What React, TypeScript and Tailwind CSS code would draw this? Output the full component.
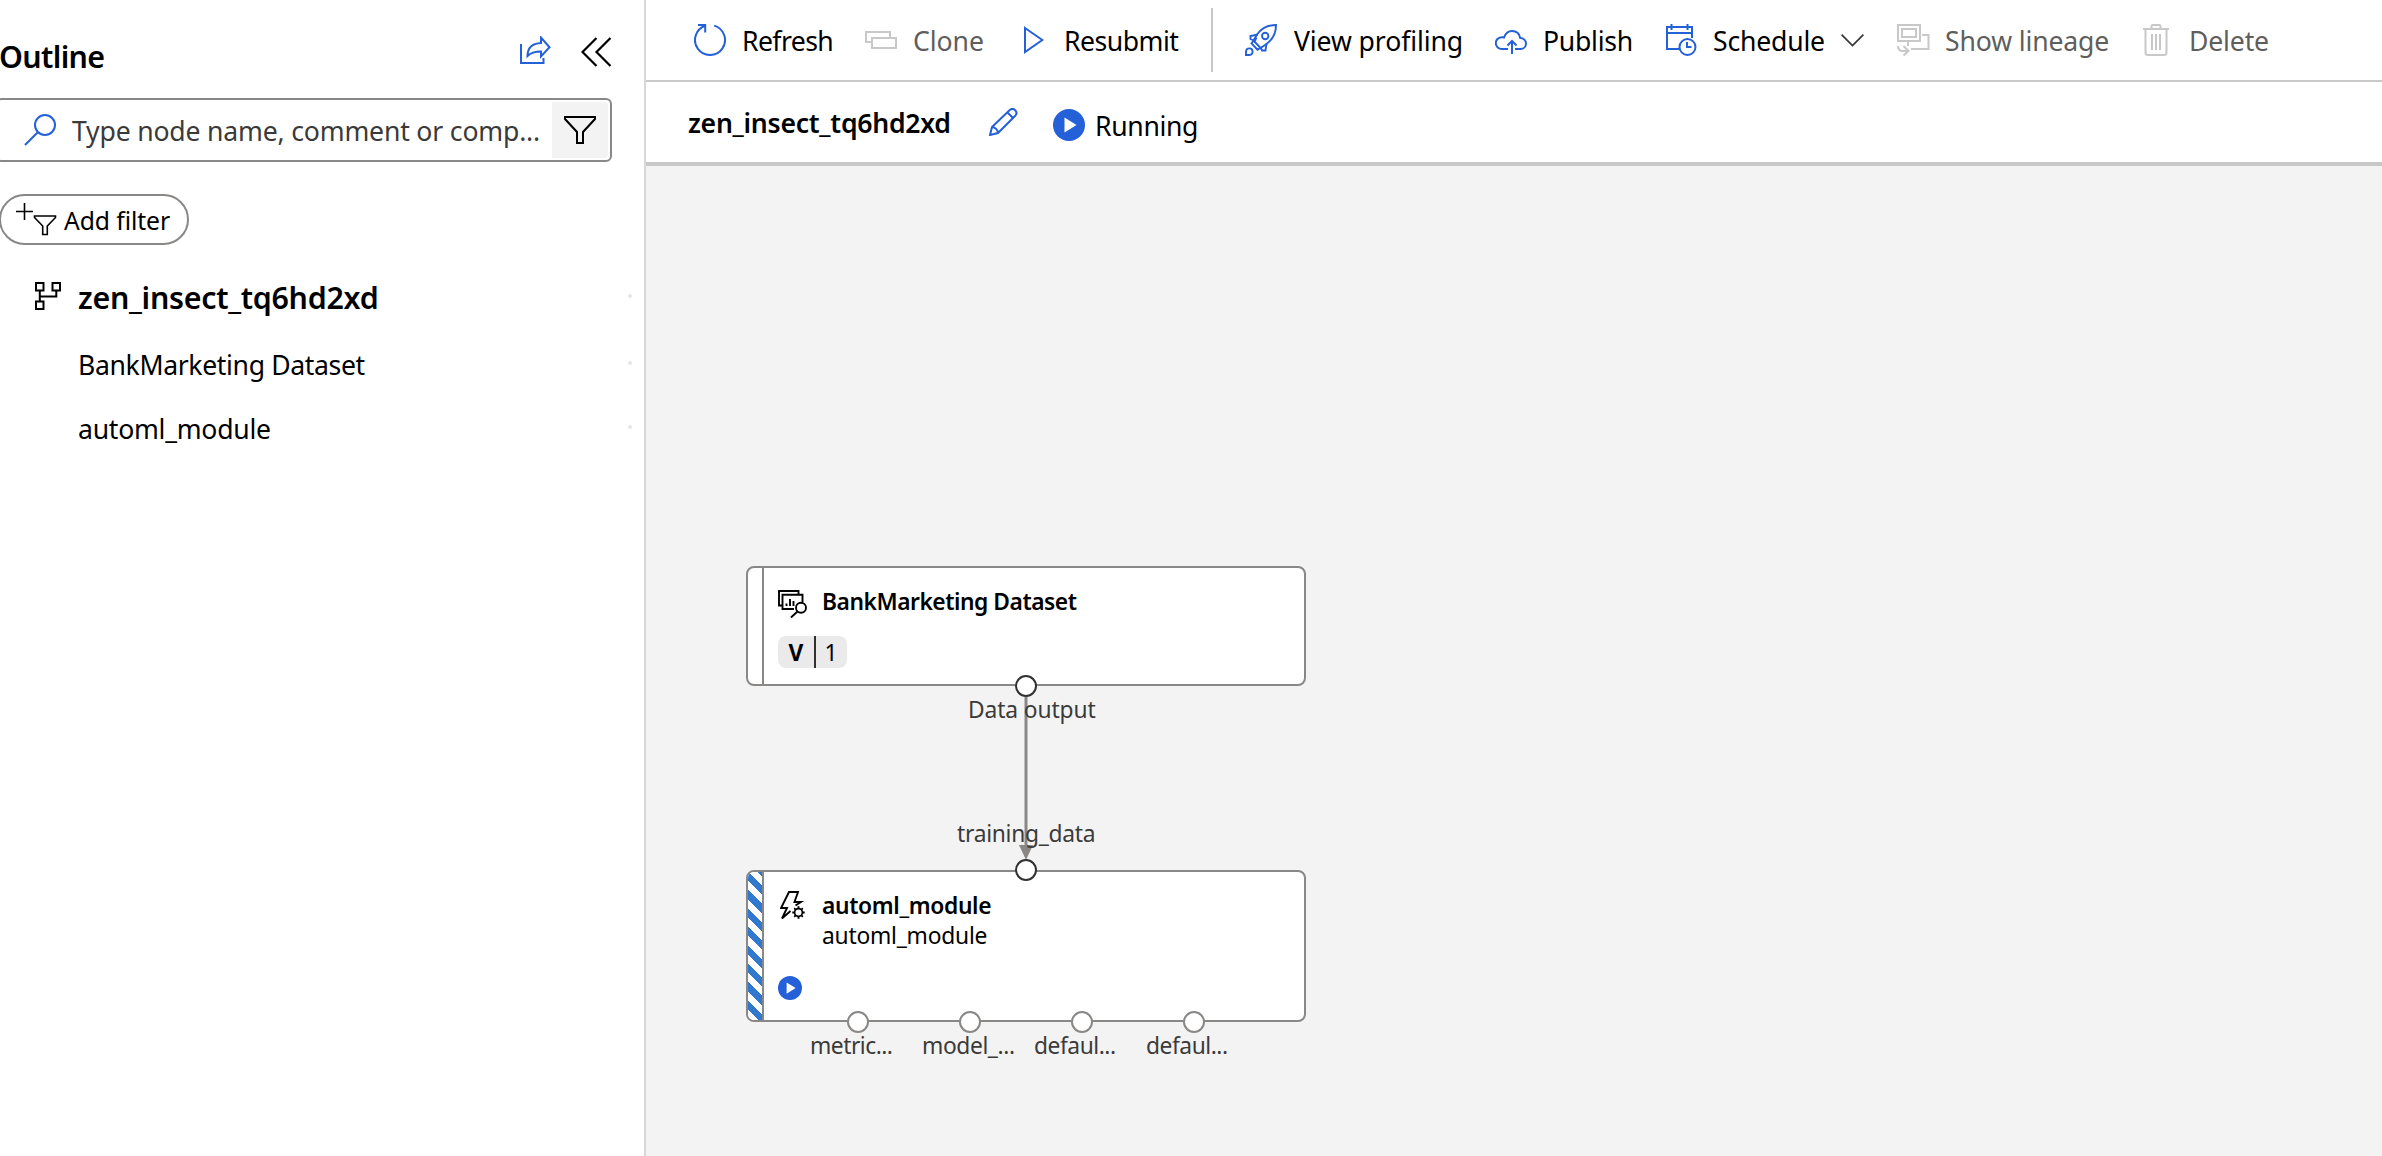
import React from "react";

type IconProps = { w: number; h: number; className?: string; sw?: number; children: React.ReactNode };

function Icon({ w, h, className = "", sw = 2, children }: IconProps) {
  return (
    <svg
      width={w}
      height={h}
      viewBox={`0 0 ${w} ${h}`}
      fill="none"
      stroke="currentColor"
      strokeWidth={sw}
      className={`shrink-0 ${className}`}
    >
      {children}
    </svg>
  );
}

const ShareIcon = () => (
  <Icon w={31} h={28} className="text-[#2460d8]">
    <path d="M1 8V27H23.5V22" />
    <path d="M21 1.5V7C12 7.5 7.500 12 7.500 20C11 16.500 15 15.500 21 15.500V20.500L29.500 11.300Z" />
  </Icon>
);

const CollapseIcon = () => (
  <Icon w={31} h={30} className="text-black" sw={2.2}>
    <path d="M15.500 1L1.500 15L15.500 29M29.500 1L15.500 15L29.500 29" />
  </Icon>
);

const SearchIcon = () => (
  <Icon w={32} h={32} className="text-[#2460d8]">
    <circle cx="21" cy="11" r="10" />
    <path d="M13.800 18.200L1 31" />
  </Icon>
);

const FunnelIcon = () => (
  <Icon w={32} h={28} className="text-black">
    <path d="M1 1H31V3L19 16V27H13V16L1 3Z" />
  </Icon>
);

const AddFilterIcon = () => (
  <Icon w={41} h={33} className="text-black" sw={1.6}>
    <path d="M8.500 0V17M0 8.500H17" />
    <path d="M18.500 13H39.500V14.500L31.300 23V31.500H26.700V23L18.500 14.500Z" />
  </Icon>
);

const PipelineIcon = () => (
  <Icon w={26} h={28} className="text-black">
    <path d="M1 1H8.500V8.500H1ZM17.500 1H25V8.500H17.500ZM1 19.500H8.500V27H1Z" />
    <path d="M4.800 8.500V19.500M4.800 14.500H21.300V8.500" />
  </Icon>
);

const RefreshIcon = () => (
  <Icon w={32} h={32} className="text-[#2460d8]">
    <path d="M20.200 1.600A15 15 0 1 1 11.500 1.700" />
    <path d="M4 1H11.200V8.500" />
  </Icon>
);

const CloneIcon = () => (
  <Icon w={32} h={18} className="text-[#c8c8c8]">
    <path d="M6 11H1V1H25V7M7 7H31V17H7Z" />
  </Icon>
);

const ResubmitIcon = () => (
  <Icon w={20} h={28} className="text-[#2460d8]">
    <path d="M1 2L18.300 14L1 26Z" />
  </Icon>
);

const RocketIcon = () => (
  <Icon w={32} h={32} className="text-[#2460d8]" sw={1.9}>
    <path d="M31 1C22 1 16 5 12 10.500L8.500 16.500L15.500 24L21.500 20C27 16 31 10 31 1Z" />
    <circle cx="20.200" cy="12" r="3.200" />
    <path d="M13 10.500L5.500 12V15L8.700 16.500M21.500 19.500L20.500 26.500H17L15.700 23.500M9 16L6.500 19.500L12.500 25.700L16 23.500M11.500 13.500L10 17" />
    <path d="M1 31V27.500A3.300 3.300 0 1 1 4.500 31Z" />
  </Icon>
);

const PublishIcon = () => (
  <Icon w={32} h={24} className="text-[#2460d8]">
    <path d="M13 19H7A5.800 5.800 0 0 1 6.300 7.300C7.300 7 8.200 7.200 9 7.500C10.500 3.500 13.300 1 17 1C21.500 1 24.500 4 25.200 8C28.500 8 31 10.500 31 13.500C31 16.600 28.700 19 25.500 19H20" />
    <path d="M17 24V11.500M12.500 15.500L17 11L21.500 15.500" />
  </Icon>
);

const ScheduleIcon = () => (
  <Icon w={31} h={32} className="text-[#2460d8]">
    <path d="M13 25H1V3H26V14M1 9H26M5.500 0V6M21.500 0V6" />
    <circle cx="21.500" cy="23" r="8" />
    <path d="M21 18V23H25.500" />
  </Icon>
);

const ChevronIcon = () => (
  <Icon w={23} h={13} className="text-[#323130]" sw={1.6}>
    <path d="M0.600 0.600L11.500 11.500L22.400 0.600" />
  </Icon>
);

const LineageIcon = () => (
  <Icon w={33} h={32} className="text-[#c8c8c8]">
    <path d="M1 1H23V17H1ZM5 5H19V13H5ZM25 11H31.500V25H14M11 18V22" />
    <path d="M1 22C1 25.500 3 27 6 27H11M6.500 22L11.500 27L6.500 31.500" />
  </Icon>
);

const DeleteIcon = () => (
  <Icon w={26} h={32} className="text-[#c8c8c8]">
    <path d="M0 5H26M8.500 5V2.500Q8.500 1 10 1H16Q17.500 1 17.500 2.500V5M2.500 5V28.500Q2.500 31 5 31H21Q23.500 31 23.500 28.500V5M9 10V26M13 10V26M17 10V26" />
  </Icon>
);

const PencilIcon = () => (
  <Icon w={29} h={28} className="text-[#2460d8]">
    <path d="M1 27L3 19L20.500 2.300C22.500 .5 24.800 .7 26.200 2.200C27.700 3.700 27.900 6 26 8L9 25Z" />
    <path d="M18.500 4.500L24 10M3 19C6 19 9 22 9 25" />
  </Icon>
);

function StatusIcon({ size }: { size: number }) {
  return (
    <svg width={size} height={size} viewBox="0 0 32 32" className="shrink-0">
      <circle cx="16" cy="16" r="16" fill="#2460d8" />
      <path d="M11.500 8.500V23.500L23.500 16Z" fill="white" />
    </svg>
  );
}

const DatasetIcon = () => (
  <Icon w={29} h={28} className="text-black" sw={1.9}>
    <path d="M4 15.500H1V1H20.500V4.500" />
    <path d="M16 19H4.500V4.800H24.500V12" />
    <path d="M8.500 16V13.500M12 16V9M15.500 16V11" />
    <circle cx="23" cy="17.700" r="5" />
    <path d="M19.500 21.500L13 27.500" />
  </Icon>
);

const AutomlIcon = () => (
  <Icon w={25} h={28} className="text-black" sw={1.9}>
    <path d="M15.500 14.500L21 11H14.500L18 1H9L1 17H7L2 27.500L10.500 20" />
    <circle cx="18.500" cy="21.500" r="3.900" strokeWidth="1.700" />
    <path d="M18.500 15.300V17.500M18.500 25.500V27.700M12.300 21.500H14.500M22.500 21.500H24.700M14.200 17.200L15.600 18.600M21.400 24.400L22.800 25.800M14.200 25.800L15.600 24.400M21.400 18.600L22.800 17.200" />
  </Icon>
);

function OutlinePanel() {
  return (
    <aside className="h-full w-[646px] shrink-0 overflow-hidden border-r-2 border-[#d8d8d8] bg-white">
      <div className="flex h-[98px] items-start">
        <h2 className="-ml-px mt-[37px] w-[521px] text-[30.4px] leading-10 font-semibold tracking-[-0.65px]">
          Outline
        </h2>
        <div className="mt-9">
          <ShareIcon />
        </div>
        <div className="mt-[37px] ml-[30px]">
          <CollapseIcon />
        </div>
      </div>

      <div className="-ml-1 flex h-16 w-[616px] items-center rounded-md border-2 border-[#8a8886] pl-[26px]">
        <SearchIcon />
        <span className="ml-[16px] w-[480px] shrink-0 pt-0.5 text-[26.6px] leading-9 tracking-[-0.18px] whitespace-nowrap text-[#3b3a39]">
          Type node name, comment or comp...
        </span>
        <span className="flex h-14 w-14 shrink-0 items-center justify-center rounded-r bg-[#f3f3f3]">
          <FunnelIcon />
        </span>
      </div>

      <div className="mt-8 -ml-px flex h-[51px] w-[190px] items-start rounded-full border-2 border-[#8a8886] pl-[15px]">
        <div className="mt-[7px]">
          <AddFilterIcon />
        </div>
        <span className="mt-[9px] ml-[7px] text-[24.7px] leading-8 tracking-[-0.08px]">Add filter</span>
      </div>

      <div className="mt-[33px] flex h-[38px] items-start">
        <div className="mt-1 ml-[35px]">
          <PipelineIcon />
        </div>
        <span className="ml-[17px] w-[550px] text-[30.4px] leading-10 font-semibold tracking-[-0.29px]">
          zen_insect_tq6hd2xd
        </span>
        <span className="mt-4 h-1 w-1 rounded-full bg-[#e6e6e6]" />
      </div>
      <div className="mt-[31px] flex h-9 items-start pl-[78px]">
        <span className="w-[550px] text-[26.6px] leading-9 tracking-[-0.36px]">BankMarketing Dataset</span>
        <span className="mt-[14px] h-1 w-1 rounded-full bg-[#e6e6e6]" />
      </div>
      <div className="mt-7 flex h-9 items-start pl-[78px]">
        <span className="w-[550px] text-[26.6px] leading-9 tracking-[-0.26px]">automl_module</span>
        <span className="mt-[14px] h-1 w-1 rounded-full bg-[#e6e6e6]" />
      </div>
    </aside>
  );
}

function Toolbar() {
  return (
    <div className="flex h-[82px] shrink-0 items-center border-b-2 border-[#c8c8c8] bg-white pl-12 text-[26.6px] leading-9 whitespace-nowrap">
      <div className="flex w-[171px] items-center">
        <RefreshIcon />
        <span className="ml-4 pt-0.5 tracking-[-0.6px]">Refresh</span>
      </div>
      <div className="flex w-[159px] items-center text-[#605e5c]">
        <CloneIcon />
        <span className="ml-4 pt-0.5 tracking-[-0.05px]">Clone</span>
      </div>
      <div className="flex w-[187px] items-center">
        <ResubmitIcon />
        <span className="ml-5 pt-0.5 tracking-[-0.5px]">Resubmit</span>
      </div>
      <div className="h-16 w-[34px] shrink-0 border-l-2 border-[#c8c8c8]" />
      <div className="flex w-[250px] items-center">
        <RocketIcon />
        <span className="ml-[17px] pt-0.5 tracking-[-0.1px]">View profiling</span>
      </div>
      <div className="flex w-[171px] items-center">
        <div className="pt-1">
          <PublishIcon />
        </div>
        <span className="ml-4 pt-0.5 tracking-[-0.27px]">Publish</span>
      </div>
      <div className="flex w-[231px] items-center">
        <ScheduleIcon />
        <span className="ml-4 w-[128px] pt-0.5 tracking-[-0.2px]">Schedule</span>
        <ChevronIcon />
      </div>
      <div className="flex w-[246px] items-center text-[#605e5c]">
        <LineageIcon />
        <span className="ml-[15px] pt-0.5 tracking-[-0.14px]">Show lineage</span>
      </div>
      <div className="flex items-center text-[#605e5c]">
        <DeleteIcon />
        <span className="ml-5 pt-0.5 tracking-[-0.15px]">Delete</span>
      </div>
    </div>
  );
}

function TitleBar() {
  return (
    <div className="flex h-[84px] shrink-0 items-start border-b-4 border-[#c8c8c8] bg-white pl-[42px] whitespace-nowrap">
      <h1 className="mt-[23px] w-[301px] text-[26.6px] leading-9 font-semibold tracking-[-0.26px]">
        zen_insect_tq6hd2xd
      </h1>
      <div className="mt-[26px]">
        <PencilIcon />
      </div>
      <div className="mt-[27px] ml-[35px]">
        <StatusIcon size={32} />
      </div>
      <span className="mt-[26px] ml-[10px] text-[26.6px] leading-9 tracking-[-0.34px]">Running</span>
    </div>
  );
}

const outputs = [
  { name: "metric...", port: "left-[201px]", label: "left-[164px] tracking-[-0.5px]" },
  { name: "model_...", port: "left-[313px]", label: "left-[276px] tracking-[-0.4px]" },
  { name: "defaul...", port: "left-[425px]", label: "left-[388px] tracking-[-0.46px]" },
  { name: "defaul...", port: "left-[537px]", label: "left-[500px] tracking-[-0.46px]" },
];

const portBase = "absolute h-[22px] w-[22px] rounded-full border-2 bg-white";
const labelBase = "absolute text-[22.8px] leading-8 whitespace-nowrap text-[#3b3a39]";

function Canvas() {
  return (
    <main className="relative flex-1 overflow-hidden bg-[#f3f3f3]">
      <div className="absolute top-[400px] left-[100px] flex h-[120px] w-[560px] overflow-hidden rounded-lg border-2 border-[#8a8886] bg-white">
        <div className="w-4 shrink-0 border-r-2 border-[#8a8886]" />
        <div className="pt-[22px] pl-[14px]">
          <div className="flex h-[28px] items-start">
            <DatasetIcon />
            <span className="-mt-[4px] ml-[15px] text-[22.8px] leading-8 font-semibold tracking-[-0.47px]">
              BankMarketing Dataset
            </span>
          </div>
          <div className="mt-[18px] flex h-8 w-[69px] items-center rounded-lg bg-[#eaeaea] text-[22.8px] leading-8">
            <span className="w-9 pt-0.5 text-center font-bold">V</span>
            <span className="h-8 w-0.5 bg-[#323130]" />
            <span className="w-[30px] pt-0.5 text-center">1</span>
          </div>
        </div>
      </div>

      <div className="absolute top-[704px] left-[100px] flex h-[152px] w-[560px] overflow-hidden rounded-lg border-2 border-[#8a8886] bg-white">
        <div className="w-4 shrink-0 border-r-2 border-[#8a8886] bg-[repeating-linear-gradient(45deg,#3179cf_0px,#3179cf_1px,#ffffff_1px,#ffffff_7.5px,#3179cf_7.5px,#3179cf_13px)]" />
        <div className="flex flex-col pt-[19px] pl-[14px]">
          <div className="flex h-[58px] items-start pl-0.5">
            <AutomlIcon />
            <div className="ml-[17px] flex flex-col text-[22.8px] leading-[30px]">
              <span className="font-semibold tracking-[-0.35px]">automl_module</span>
              <span className="tracking-[-0.23px]">automl_module</span>
            </div>
          </div>
          <div className="mt-[27px]">
            <StatusIcon size={24} />
          </div>
        </div>
      </div>

      <svg width="14" height="163" viewBox="0 0 14 163" className="absolute top-[531px] left-[373px]">
        <path d="M7 0V150" stroke="#8a8886" strokeWidth="3" />
        <path d="M0 148H14L7 163Z" fill="#8a8886" />
      </svg>

      <div className={`${portBase} top-[509px] left-[369px] border-[#323130]`} />
      <div className={`${portBase} top-[693px] left-[369px] border-[#323130]`} />
      <span className={`${labelBase} top-[528px] left-[322px] tracking-[-0.11px]`}>Data output</span>
      <span className={`${labelBase} top-[652px] left-[311px] tracking-[-0.28px]`}>training_data</span>

      {outputs.map((o, i) => (
        <React.Fragment key={i}>
          <div className={`${portBase} top-[845px] border-[#8a8886] ${o.port}`} />
          <span className={`${labelBase} top-[864px] ${o.label}`}>{o.name}</span>
        </React.Fragment>
      ))}
    </main>
  );
}

export default function App() {
  return (
    <div className="flex h-screen w-full overflow-hidden bg-white font-['Noto_Sans','Open_Sans',sans-serif] text-black">
      <OutlinePanel />
      <div className="flex min-w-0 flex-1 flex-col">
        <Toolbar />
        <TitleBar />
        <Canvas />
      </div>
    </div>
  );
}
